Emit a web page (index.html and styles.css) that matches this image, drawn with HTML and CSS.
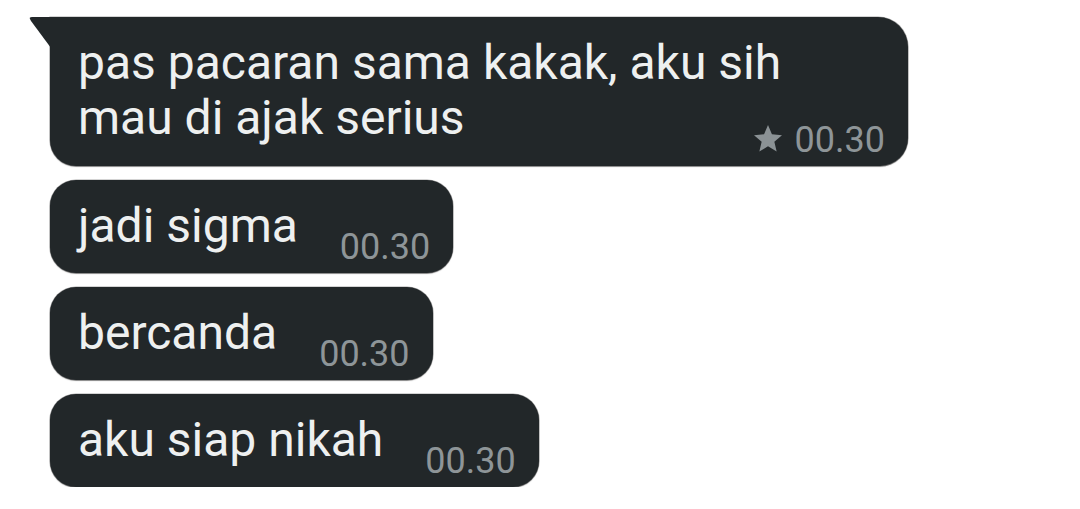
FILE: index.html
```html
<!DOCTYPE html>
<html>
<head>
<meta charset="utf-8">
<link rel="stylesheet" href="styles.css">
</head>
<body>
<div class="chat">
  <div class="bubble bubble-first">
    <div class="text">pas pacaran sama kakak, aku sih<br>mau di ajak serius</div>
    <div class="meta meta-below">
      <svg class="star" viewBox="2 2 20 19.3" width="28" height="27"><path d="M12 17.27L18.18 21l-1.64-7.03L22 9.24l-7.19-.61L12 2 9.19 8.63 2 9.24l5.46 4.73L5.82 21z" fill="#8b9295"/></svg>
      <span class="time">00.30</span>
    </div>
  </div>
  <div class="bubble bubble-row">
    <div class="text">jadi sigma</div>
    <div class="meta"><span class="time">00.30</span></div>
  </div>
  <div class="bubble bubble-row">
    <div class="text">bercanda</div>
    <div class="meta"><span class="time">00.30</span></div>
  </div>
  <div class="bubble bubble-row">
    <div class="text">aku siap nikah</div>
    <div class="meta"><span class="time">00.30</span></div>
  </div>
</div>
</body>
</html>
```

FILE: styles.css
```css
html, body {
  margin: 0;
  padding: 0;
  background: #ffffff;
}

body {
  font-family: Roboto, "Noto Sans", "Liberation Sans", sans-serif;
}

.chat {
  display: flex;
  flex-direction: column;
  align-items: flex-start;
  gap: 14px;
  padding: 17px 0 0 50px;
}

.bubble {
  position: relative;
  background: #222729;
  color: #eef0f0;
  border-radius: 26px;
  padding: 18px 23px 8px 28px;
  box-shadow: 0 1px 1px rgba(0, 0, 0, 0.35), 0 0 0 0.6px rgba(0, 0, 0, 0.35);
}

.bubble-first {
  width: 807px;
  border-radius: 0 30px 28px 26px;
}

.bubble-first::before {
  content: "";
  position: absolute;
  left: -21px;
  top: 0;
  width: 22px;
  height: 31px;
  background: #222729;
  clip-path: polygon(0 0, 100% 0, 100% 100%, 2px 4px);
  border-top-left-radius: 3px;
}

.text {
  font-size: 48px;
  line-height: 55px;
  white-space: nowrap;
}

.bubble-row {
  display: flex;
  align-items: flex-start;
}

.meta {
  display: flex;
  align-items: center;
  gap: 13px;
  color: #8e9598;
  font-size: 36px;
  line-height: 36px;
  margin-top: 31px;
  margin-left: 42px;
}

.meta-below {
  justify-content: flex-end;
  margin-top: -23px;
  margin-left: 0;
}

.star {
  display: block;
  flex-shrink: 0;
  margin-top: -3px;
}
```
